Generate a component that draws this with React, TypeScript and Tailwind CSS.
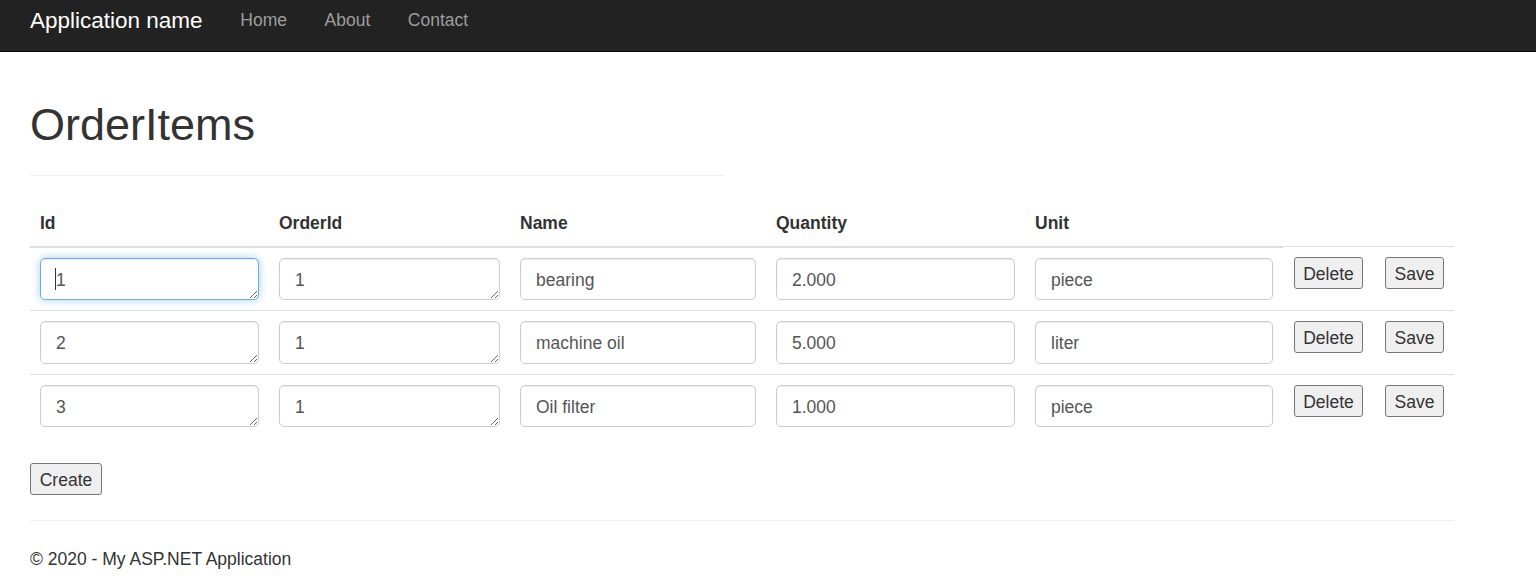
const rows = [
  { id: "1", orderId: "1", name: "bearing", quantity: "2.000", unit: "piece" },
  { id: "2", orderId: "1", name: "machine oil", quantity: "5.000", unit: "liter" },
  { id: "3", orderId: "1", name: "Oil filter", quantity: "1.000", unit: "piece" },
];

const field =
  "block w-full h-[42.5px] rounded-[5px] border bg-white px-[15px] pt-[9px] pb-[6px] text-[17.5px] leading-[25px] text-[#555] outline-none";
const idle = "border-[#ccc] shadow-[inset_0_1px_1px_rgba(0,0,0,0.075)]";
const focused =
  "border-[#66afe9] shadow-[inset_0_1px_1px_rgba(0,0,0,0.075),0_0_8px_rgba(102,175,233,0.6)]";
const btn =
  "h-[32px] rounded-[3px] border border-[#767676] bg-[#efefef] pt-[3px] text-[17.5px] leading-[25px] text-[#333]";

const App = () => {
  return (
    <div className="min-h-screen bg-white font-['Liberation_Sans',Arial,sans-serif] text-[17.5px] leading-[25px] text-[#333]">
      <nav className="h-[52px] bg-[#222] border-b border-[#080808]">
        <div className="h-[40px] pl-[30px] flex items-center">
          <span className="text-[22.5px] text-white pr-[19px]">Application name</span>
          {["Home", "About", "Contact"].map((l) => (
            <span key={l} className="px-[18.75px] text-[17.5px] text-[#9d9d9d]">
              {l}
            </span>
          ))}
        </div>
      </nav>

      <div className="pl-[30px] w-[1454px]">
        <h2 className="mt-[48px] text-[45px] leading-[49.5px] font-normal">OrderItems</h2>
        <hr className="mt-[25px] mb-[25px] w-[693px] border-0 border-t border-[#eee]" />

        <table className="w-[1424px] table-fixed border-collapse">
          <colgroup>
            <col className="w-[239px]" />
            <col className="w-[241px]" />
            <col className="w-[256px]" />
            <col className="w-[259px]" />
            <col className="w-[258px]" />
            <col className="w-[91px]" />
            <col className="w-[80px]" />
          </colgroup>
          <thead>
            <tr>
              {["Id", "OrderId", "Name", "Quantity", "Unit"].map((h) => (
                <th
                  key={h}
                  className="p-[10px] text-left font-bold align-bottom border-b-2 border-[#ddd]"
                >
                  {h}
                </th>
              ))}
            </tr>
          </thead>
          <tbody>
            {rows.map((r, i) => (
              <tr key={r.id} className="border-t border-[#ddd]">
                <td className="p-[10px] align-top">
                  <div className="relative">
                    <textarea
                      readOnly
                      defaultValue={r.id}
                      className={`${field} ${i === 0 ? focused : idle}`}
                    />
                    {i === 0 && (
                      <span className="absolute left-[15px] top-[10px] h-[22px] w-px bg-[#333]" />
                    )}
                  </div>
                </td>
                <td className="p-[10px] align-top">
                  <textarea readOnly defaultValue={r.orderId} className={`${field} ${idle}`} />
                </td>
                <td className="p-[10px] align-top">
                  <input readOnly defaultValue={r.name} className={`${field} ${idle}`} />
                </td>
                <td className="p-[10px] align-top">
                  <input readOnly defaultValue={r.quantity} className={`${field} ${idle}`} />
                </td>
                <td className="p-[10px] align-top">
                  <input readOnly defaultValue={r.unit} className={`${field} ${idle}`} />
                </td>
                <td className="p-[10px] pl-[11px] align-top">
                  <button className={`${btn} w-[69px]`}>Delete</button>
                </td>
                <td className="p-[10px] pl-[11px] align-top">
                  <button className={`${btn} w-[59px]`}>Save</button>
                </td>
              </tr>
            ))}
          </tbody>
        </table>

        <div className="mt-[26px]">
          <button className={`${btn} w-[72px]`}>Create</button>
        </div>

        <hr className="mt-[25px] mb-[26px] border-0 border-t border-[#eee]" />
        <footer>
          <p>© 2020 - My ASP.NET Application</p>
        </footer>
      </div>
    </div>
  );
};

export default App;
